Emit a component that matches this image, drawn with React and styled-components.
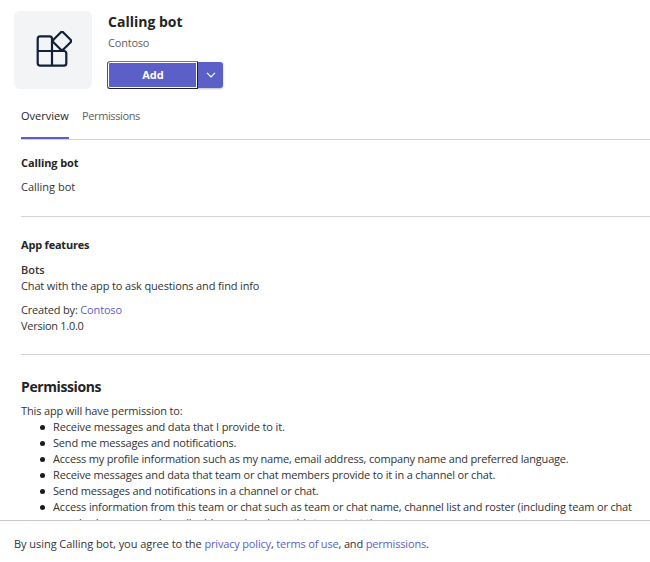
import React from "react";
import styled, { createGlobalStyle } from "styled-components";

const Global = createGlobalStyle`
  * { box-sizing: border-box; }
  body { margin: 0; background: #fff; overflow: hidden; }
`;

const Page = styled.div`
  width: 650px;
  height: 562px;
  display: flex;
  flex-direction: column;
  overflow: hidden;
  background: #fff;
  color: #333;
  font: 400 11px/16px "Open Sans", "Noto Sans", sans-serif;
`;

const Header = styled.header`
  display: flex;
  gap: 16px;
  flex: none;
  height: 89px;
  padding: 11px 0 0 14px;
`;

const AppTile = styled.div`
  width: 78px;
  height: 78px;
  border-radius: 6px;
  background: #f2f4f6;
  display: grid;
  place-items: center;
`;

const HeaderInfo = styled.div`
  display: flex;
  flex-direction: column;
`;

const Text = styled.span`
  letter-spacing: ${(p) => p.$track || 0}px;
  white-space: nowrap;
`;

const Title = styled.h1`
  margin: 1px 0 0;
  font-size: 14px;
  line-height: 20px;
  font-weight: 700;
  color: #242424;
`;

const Publisher = styled.div`
  margin-top: 3px;
  color: #616161;
`;

const SplitButton = styled.div`
  display: flex;
  margin: 10px 0 0 -1px;
  width: 116px;
  height: 28px;
`;

const AddButton = styled.button`
  width: 91px;
  height: 28px;
  padding: 0 0 0 1px;
  border: 1px solid #222;
  border-top-color: #777;
  border-left-color: #555;
  border-radius: 3px 0 0 3px;
  box-shadow: inset 0 0 0 1px #fff;
  background: #5b5fc7;
  color: #fff;
  font: 700 11px/16px "Open Sans", sans-serif;
`;

const MenuButton = styled.button`
  width: 25px;
  height: 26px;
  margin-top: 1px;
  padding: 0;
  border: 0;
  border-radius: 0 3px 3px 0;
  background: #5b5fc7;
  box-shadow: 0 1px 2px rgba(0, 0, 0, 0.25);
  display: grid;
  place-items: center;
`;

const Tabs = styled.nav`
  display: flex;
  flex: none;
  gap: 13px;
  height: 51px;
  margin-left: 21px;
  border-bottom: 1px solid #d4d4d4;
`;

const Tab = styled.div`
  height: 50px;
  padding-top: 19px;
  width: ${(p) => p.$width}px;
  color: ${(p) => (p.$active ? "#242424" : "#616161")};
  border-bottom: ${(p) => (p.$active ? "2px solid #5b5fc7" : "0")};
`;

const Content = styled.main`
  flex: 1;
  min-height: 0;
  overflow: hidden;
  padding-left: 21px;
`;

const Section = styled.section`
  height: ${(p) => p.$height}px;
  padding-top: ${(p) => p.$top}px;
  border-bottom: ${(p) => (p.$last ? "0" : "1px solid #d4d4d4")};
`;

const Heading = styled.h2`
  margin: 0 0 8px;
  font-size: 11px;
  line-height: 16px;
  font-weight: 700;
  color: #242424;
`;

const BigHeading = styled.h2`
  margin: 0 0 6px;
  font-size: 14px;
  line-height: 20px;
  font-weight: 700;
  color: #242424;
`;

const Line = styled.div`
  margin-top: ${(p) => p.$gap || 0}px;
  font-weight: ${(p) => (p.$strong ? 600 : 400)};
`;

const Link = styled.a`
  color: #5b5fc7;
`;

const List = styled.ul`
  margin: 0;
  padding: 0 0 0 32px;
  list-style: none;
`;

const Item = styled.li`
  display: flex;
  line-height: 16px;
  &::before {
    content: "";
    flex: none;
    width: 5px;
    height: 5px;
    margin: 6px 8px 0 -13px;
    border-radius: 50%;
    background: #1a1a1a;
  }
`;

const WrappedText = styled.div`
  display: flex;
  flex-direction: column;
`;

const Footer = styled.footer`
  flex: none;
  height: 42px;
  padding: 15px 0 0 14px;
  border-top: 1px solid #c8c8c8;
  background: #fff;
`;

const AppIcon = () => (
  <svg width="38" height="38" viewBox="0 0 38 38" fill="none" stroke="#13203a" strokeWidth="2.2" strokeLinejoin="round">
    <path d="M18 34.7V7.8Q18 5.4 15.6 5.4H6.1Q3.7 5.4 3.7 7.8V32Q3.7 34.7 6.3 34.7H29.9Q32.3 34.7 32.3 32.2V22.4Q32.3 20 29.9 20H3.7" />
    <rect x="21" y="3" width="14" height="14" rx="2.2" transform="rotate(45 28 10)" />
  </svg>
);

const permissions = [
  ["Receive messages and data that I provide to it.", -0.12],
  ["Send me messages and notifications.", -0.18],
  ["Access my profile information such as my name, email address, company name and preferred language.", -0.18],
  ["Receive messages and data that team or chat members provide to it in a channel or chat.", -0.15],
  ["Send messages and notifications in a channel or chat.", -0.16],
];

export default function App() {
  return (
    <Page>
      <Global />
      <Header>
        <AppTile><AppIcon /></AppTile>
        <HeaderInfo>
          <Title><Text>Calling bot</Text></Title>
          <Publisher><Text $track={-0.2}>Contoso</Text></Publisher>
          <SplitButton>
            <AddButton>Add</AddButton>
            <MenuButton aria-label="More options">
              <svg width="10" height="6" viewBox="0 0 10 6" fill="none" stroke="#fff" strokeWidth="1.2"><path d="M1 .8 5 4.8 9 .8" /></svg>
            </MenuButton>
          </SplitButton>
        </HeaderInfo>
      </Header>
      <Tabs>
        <Tab $active $width={48}><Text>Overview</Text></Tab>
        <Tab $width={60}><Text $track={-0.38}>Permissions</Text></Tab>
      </Tabs>
      <Content>
        <Section $height={77} $top={15}>
          <Heading><Text $track={-0.1}>Calling bot</Text></Heading>
          <Line><Text>Calling bot</Text></Line>
        </Section>
        <Section $height={138} $top={20}>
          <Heading><Text $track={-0.2}>App features</Text></Heading>
          <Line $strong $gap={9}><Text>Bots</Text></Line>
          <Line><Text $track={-0.14}>Chat with the app to ask questions and find info</Text></Line>
          <Line $gap={8}><Text $track={-0.17}>Created by: <Link>Contoso</Link></Text></Line>
          <Line><Text $track={-0.27}>Version 1.0.0</Text></Line>
        </Section>
        <Section $last $height={200} $top={22}>
          <BigHeading><Text $track={-0.4}>Permissions</Text></BigHeading>
          <Line><Text $track={-0.15}>This app will have permission to:</Text></Line>
          <List>
            {permissions.map(([label, track]) => (
              <Item key={label}><Text $track={track}>{label}</Text></Item>
            ))}
            <Item>
              <WrappedText>
                <Text $track={-0.16}>Access information from this team or chat such as team or chat name, channel list and roster (including team or chat</Text>
                <Text $track={-0.16}>member's names and email addresses) and use this to contact them.</Text>
              </WrappedText>
            </Item>
          </List>
        </Section>
      </Content>
      <Footer>
        <Text $track={-0.05}>By using Calling bot, you agree to the </Text>
        <Text $track={-0.17}>
          <Link>privacy policy</Link>, <Link>terms of use</Link>, and <Link>permissions</Link>.
        </Text>
      </Footer>
    </Page>
  );
}
